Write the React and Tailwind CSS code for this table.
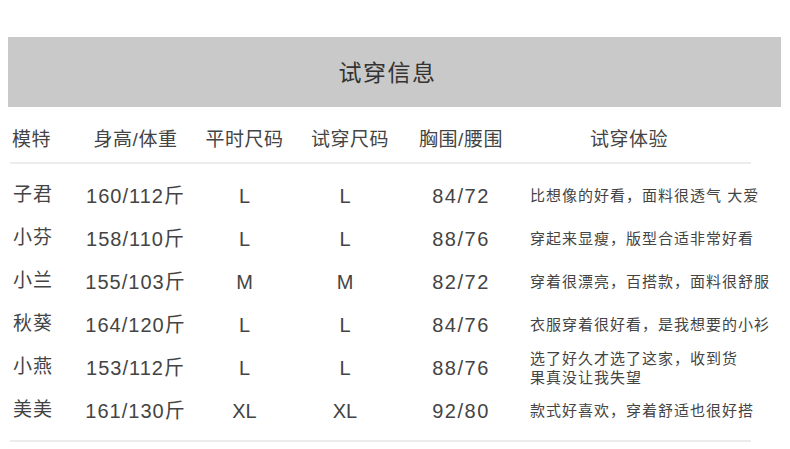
const rows = [
	{ name: '子君', hw: '160/112斤', usual: 'L', trial: 'L', bust: '84/72', note: ['比想像的好看，面料很透气 大爱'] },
	{ name: '小芬', hw: '158/110斤', usual: 'L', trial: 'L', bust: '88/76', note: ['穿起来显瘦，版型合适非常好看'] },
	{ name: '小兰', hw: '155/103斤', usual: 'M', trial: 'M', bust: '82/72', note: ['穿着很漂亮，百搭款，面料很舒服'] },
	{ name: '秋葵', hw: '164/120斤', usual: 'L', trial: 'L', bust: '84/76', note: ['衣服穿着很好看，是我想要的小衫'] },
	{ name: '小燕', hw: '153/112斤', usual: 'L', trial: 'L', bust: '88/76', note: ['选了好久才选了这家，收到货', '果真没让我失望'] },
	{ name: '美美', hw: '161/130斤', usual: 'XL', trial: 'XL', bust: '92/80', note: ['款式好喜欢，穿着舒适也很好搭'] },
]

const font = { fontFamily: '"Liberation Sans", "Noto Sans CJK SC", sans-serif' }

const App = () => {
	return (
		<div className="w-[790px] h-[449px] bg-white text-[#444] overflow-hidden" style={font}>
			<div className="mt-[37px] ml-[8px] w-[773px] h-[70px] bg-[#c8c9c8] flex items-center justify-center">
				<span className="text-[23px] tracking-[1.5px] text-[#333] pr-[14px] pt-[2px]">试穿信息</span>
			</div>

			<div className="ml-[10px] w-[741px]">
				<div className="flex items-center h-[57px] pt-[11px] border-b-2 border-[#ececec] text-[19px] tracking-[0.5px]">
					<div className="w-[72px] pl-[2px]">模特</div>
					<div className="w-[107px] text-center">身高/体重</div>
					<div className="w-[111px] text-center">平时尺码</div>
					<div className="w-[100px] text-center">试穿尺码</div>
					<div className="w-[122px] text-center">胸围/腰围</div>
					<div className="w-[229px] pl-[8px]">
						<div className="w-[198px] text-center">试穿体验</div>
					</div>
				</div>

				<div className="pt-[10px] pb-[8px] border-b-2 border-[#ececec]">
					{rows.map((r) => (
						<div key={r.name} className="flex items-center h-[43px]">
							<div className="w-[72px] pl-[3px] text-[19px] tracking-[1px]">{r.name}</div>
							<div className="w-[107px] text-center text-[20px] tracking-[1px]">{r.hw}</div>
							<div className="w-[111px] text-center text-[20px]">{r.usual}</div>
							<div className="w-[100px] text-center pr-[10px] text-[20px]">{r.trial}</div>
							<div className="w-[122px] text-center text-[20px] tracking-[1.5px]">{r.bust}</div>
							<div className="w-[229px] pl-[8px] text-[15px] tracking-[1px] leading-[19px] whitespace-nowrap">
								{r.note.map((line) => (
									<div key={line}>{line}</div>
								))}
							</div>
						</div>
					))}
				</div>
			</div>
		</div>
	)
}

export default App
